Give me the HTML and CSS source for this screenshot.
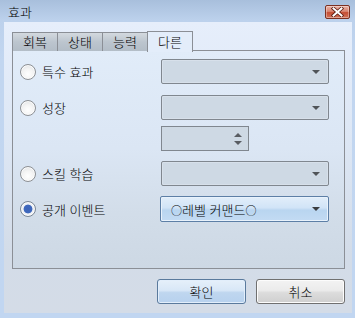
FILE: index.html
```html
<!DOCTYPE html>
<html lang="ko">
<head>
<meta charset="utf-8">
<link rel="stylesheet" href="styles.css">
</head>
<body>
<div class="window">
  <div class="titlebar">
    <span class="title">효과</span>
    <span class="close"><svg width="17" height="10" viewBox="0 0 17 10"><path d="M4.5 1.5 L12.5 8.5 M12.5 1.5 L4.5 8.5" stroke="#5a1a10" stroke-width="3.6" stroke-linecap="square"/><path d="M4.5 1.5 L12.5 8.5 M12.5 1.5 L4.5 8.5" stroke="#fff" stroke-width="2" stroke-linecap="square"/></svg></span>
  </div>
  <div class="client">
    <div class="tabs">
      <div class="tab">회복</div>
      <div class="tab">상태</div>
      <div class="tab">능력</div>
      <div class="tab active">다른</div>
    </div>
    <div class="panel">
      <div class="row r1">
        <label class="opt"><span class="radio"></span>특수 효과</label>
        <div class="combo disabled"><span class="arrow"></span></div>
      </div>
      <div class="row r2">
        <label class="opt"><span class="radio"></span>성장</label>
        <div class="combo disabled"><span class="arrow"></span></div>
      </div>
      <div class="row r2b">
        <div class="spacer"></div>
        <div class="spin"><span class="up"></span><span class="down"></span></div>
      </div>
      <div class="row r3">
        <label class="opt"><span class="radio"></span>스킬 학습</label>
        <div class="combo disabled"><span class="arrow"></span></div>
      </div>
      <div class="row r4">
        <label class="opt"><span class="radio checked"></span>공개 이벤트</label>
        <div class="combo active"><span class="val"><span class="ring">○</span>레벨 커맨드<span class="ring">○</span></span><span class="arrow"></span></div>
      </div>
    </div>
    <div class="buttons">
      <div class="btn default">확인</div>
      <div class="btn">취소</div>
    </div>
  </div>
</div>
</body>
</html>
```

FILE: styles.css
```css
* { box-sizing: border-box; }
html, body { margin: 0; padding: 0; }
body {
  font-family: "Noto Sans CJK KR", "Noto Sans", sans-serif;
  font-size: 13px;
  font-weight: 300;
  color: #000;
  width: 355px;
  height: 318px;
  overflow: hidden;
}
.window {
  width: 355px;
  height: 318px;
  background: linear-gradient(to bottom, #a8bfdc 0px, #bcd1ec 20px, #c2d6f0 60px, #c1d6f1 100%);
  padding: 0 3px 5px 4px;
  display: flex;
  flex-direction: column;
}
.titlebar {
  height: 22px;
  display: flex;
  align-items: center;
  justify-content: space-between;
  padding: 0 2px 0 4px;
}
.title {
  font-size: 13px;
  line-height: 14px;
  margin-top: 2px;
}
.close {
  width: 25px;
  height: 14px;
  margin-top: 1px;
  border: 1px solid #7c3021;
  border-radius: 2px;
  background: linear-gradient(to bottom, #eab3a6 0%, #d98571 45%, #c54d33 55%, #d0735b 100%);
  display: flex;
  align-items: center;
  justify-content: center;
  box-shadow: inset 0 0 0 1px rgba(255,255,255,0.35);
}
.close svg { display: block; }
.client {
  flex: 1;
  background: linear-gradient(to bottom, #e6eefb 0%, #dde7f5 40%, #d3dce8 80%, #d4dce7 100%);
  padding: 9px 8px 0 8px;
  display: flex;
  flex-direction: column;
}
.tabs {
  display: flex;
  height: 20px;
  align-items: flex-end;
  position: relative;
  z-index: 1;
  margin-bottom: -1px;
}
.tab {
  width: 46px;
  height: 19px;
  border: 1px solid #8b8f96;
  border-bottom: none;
  margin-right: -1px;
  background: linear-gradient(to bottom, #d3d9df 0%, #bcc5ce 50%, #b3bdc7 100%);
  text-align: center;
  line-height: 18px;
  font-size: 13px;
}
.tab.active {
  height: 21px;
  margin-bottom: -1px;
  background: #e3edfa;
  line-height: 20px;
  margin-right: 0;
  width: 46px;
}
.panel {
  width: 333px;
  height: 219px;
  border: 1px solid #8b8f96;
  background: linear-gradient(to bottom, #e1ecf9 0%, #dbe6f4 45%, #d2dde9 75%, #cdd8e4 100%);
  padding: 8px 0 0 7px;
  display: flex;
  flex-direction: column;
}
.row {
  display: flex;
  align-items: center;
  height: 25px;
}
.r2 { margin-top: 11px; }
.r2b { margin-top: 6px; }
.r3 { margin-top: 10px; }
.r4 { margin-top: 10px; height: 26px; }
.opt {
  width: 141px;
  display: flex;
  align-items: center;
  font-size: 13px;
  white-space: nowrap;
}
.spacer { width: 141px; }
.radio {
  width: 16px;
  height: 16px;
  border-radius: 50%;
  border: 1px solid #8d9094;
  background: radial-gradient(circle at 50% 65%, #ffffff 0%, #f4f4f4 45%, #d8dbde 100%);
  margin-right: 6px;
  flex: none;
  box-shadow: inset 0 0 0 1px #fbfbfb;
}
.radio.checked {
  background: radial-gradient(circle, #3b63b8 0, #3f69bd 4px, #eef1f6 4.8px, #dfe3e8 100%);
  border-color: #7a8796;
}
.combo {
  width: 168px;
  height: 25px;
  border: 1px solid #80878f;
  border-radius: 2px;
  background: #ced9e4;
  display: flex;
  align-items: center;
  position: relative;
  box-shadow: inset 0 0 0 1px #d7e0ea;
}
.combo.active {
  width: 169px;
  margin-left: -1px;
  height: 26px;
  border-color: #5d7fa6;
  background: linear-gradient(to bottom, #e2eefa 0%, #d1e4f7 45%, #b9d5f0 55%, #c3dbf3 100%);
  box-shadow: inset 0 0 0 1px #e8f2fc;
}
.val {
  padding-left: 10px;
  font-size: 13px;
}
.ring { font-size: 11px; }
.arrow {
  position: absolute;
  right: 8px;
  top: 50%;
  margin-top: -2px;
  width: 0;
  height: 0;
  border-left: 4px solid transparent;
  border-right: 4px solid transparent;
  border-top: 4px solid #505458;
}
.combo.active .arrow { border-top-color: #3a3d40; }
.spin {
  width: 88px;
  height: 25px;
  border: 1px solid #80878f;
  background: #ced9e4;
  position: relative;
}
.spin .up, .spin .down {
  position: absolute;
  right: 6px;
  width: 0;
  height: 0;
  border-left: 4px solid transparent;
  border-right: 4px solid transparent;
}
.spin .up { top: 6px; border-bottom: 4px solid #595d62; }
.spin .down { top: 14px; border-top: 4px solid #595d62; }
.buttons {
  display: flex;
  justify-content: flex-end;
  gap: 10px;
  margin-top: 10px;
  width: 333px;
}
.btn {
  width: 89px;
  height: 25px;
  border: 1px solid #707070;
  border-radius: 3px;
  background: linear-gradient(to bottom, #f3f3f3 0%, #ebebeb 45%, #dcdcdc 55%, #cfcfcf 100%);
  box-shadow: inset 0 0 0 1px #fcfcfc;
  display: flex;
  align-items: center;
  justify-content: center;
  font-size: 13px;
}
.btn.default {
  border-color: #5a7a9d;
  background: linear-gradient(to bottom, #e6f0fa 0%, #d8e7f7 45%, #bfd6ef 55%, #b7d1ee 100%);
  box-shadow: inset 0 0 0 1px #e2eefb;
}
```
